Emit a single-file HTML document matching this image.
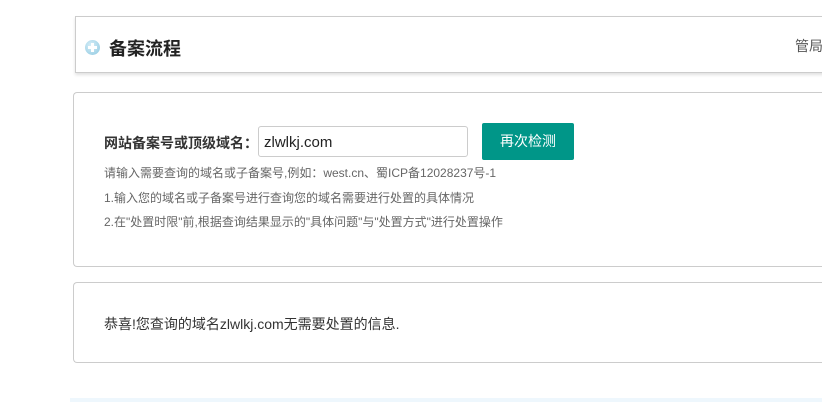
<!DOCTYPE html>
<html><head><meta charset="utf-8">
<style>
*{margin:0;padding:0;box-sizing:border-box}
body{width:822px;height:402px;overflow:hidden;background:#fff;font-family:"Liberation Sans","Noto Sans CJK SC",sans-serif;position:relative}
.hd{position:absolute;left:75px;top:16px;width:760px;height:57px;border:1px solid #ccc;border-right:none;box-shadow:0 2px 3px rgba(0,0,0,.12)}
.hd .ic{position:absolute;left:9px;top:23px;width:15px;height:15px;border-radius:50%;background:radial-gradient(circle at 40% 35%,#d6eef8,#8ec8e0)}
.hd .ic:before{content:"";position:absolute;left:6px;top:3px;width:3px;height:9px;background:#fff}
.hd .ic:after{content:"";position:absolute;left:3px;top:6px;width:9px;height:3px;background:#fff}
.hd .t{position:absolute;left:33px;top:18px;font-size:18px;font-weight:bold;color:#222}
.hd .r{position:absolute;left:719px;top:19px;font-size:14px;color:#555}
.box{position:absolute;left:73px;width:770px;border:1px solid #ccc;border-right:none;border-radius:4px 0 0 4px}
.b1{top:92px;height:175px}
.b2{top:282px;height:81px}
.lab{position:absolute;left:104px;top:133px;font-size:14px;font-weight:bold;color:#333}
.inp{position:absolute;left:258px;top:126px;width:210px;height:31px;border:1px solid #ccc;border-radius:3px;font-size:15px;color:#222;padding:7px 5px}
.btn{position:absolute;left:482px;top:123px;width:92px;height:37px;background:#009688;border-radius:2px;color:#fff;font-size:14px;text-align:center;line-height:37px}
.s{position:absolute;left:104px;font-size:12px;color:#666}
.ok{position:absolute;left:104px;top:314px;font-size:14px;color:#333}
.bot{position:absolute;left:70px;top:398px;width:752px;height:4px;background:#eef7fd}
</style></head><body>
<div class="hd"><div class="ic"></div><div class="t">备案流程</div><div class="r">管局</div></div>
<div class="box b1"></div>
<div class="lab">网站备案号或顶级域名：</div>
<div class="inp">zlwlkj.com</div>
<div class="btn">再次检测</div>
<div class="s" style="top:164px">请输入需要查询的域名或子备案号,例如：west.cn、蜀ICP备12028237号-1</div>
<div class="s" style="top:189px">1.输入您的域名或子备案号进行查询您的域名需要进行处置的具体情况</div>
<div class="s" style="top:213px">2.在"处置时限"前,根据查询结果显示的"具体问题"与"处置方式"进行处置操作</div>
<div class="box b2"></div>
<div class="ok">恭喜!您查询的域名zlwlkj.com无需要处置的信息.</div>
<div class="bot"></div>
</body></html>
